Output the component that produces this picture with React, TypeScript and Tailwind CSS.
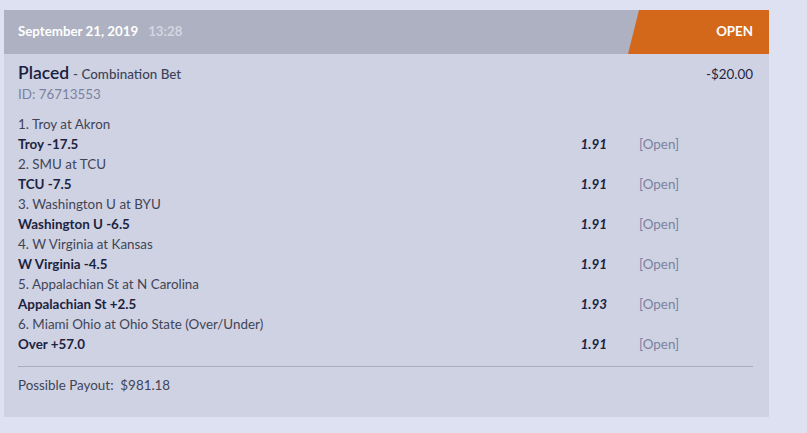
import React from "react";

const legs = [
  { game: "1. Troy at Akron", pick: "Troy -17.5", odds: "1.91" },
  { game: "2. SMU at TCU", pick: "TCU -7.5", odds: "1.91" },
  { game: "3. Washington U at BYU", pick: "Washington U -6.5", odds: "1.91" },
  { game: "4. W Virginia at Kansas", pick: "W Virginia -4.5", odds: "1.91" },
  { game: "5. Appalachian St at N Carolina", pick: "Appalachian St +2.5", odds: "1.93" },
  { game: "6. Miami Ohio at Ohio State (Over/Under)", pick: "Over +57.0", odds: "1.91" },
];

export default function App() {
  return (
    <div
      className="w-[807px] h-[433px] bg-[#dee1f1] pt-[10px] pl-[4px] overflow-hidden"
      style={{ fontFamily: "Lato, 'Open Sans', sans-serif" }}
    >
      <div className="w-[765px] bg-[#cfd2e3]">
        <div className="relative h-[44px] bg-[#adb1c1] flex items-center pl-[14px]">
          <span className="text-[13.3px] font-bold text-white">September 21, 2019</span>
          <span className="text-[13.3px] font-bold text-[#d3d6e0] ml-[10px]">13:28</span>
          <div
            className="absolute top-0 right-0 h-[44px] w-[141px] bg-[#d3681b] flex items-center justify-end pr-[16px]"
            style={{ clipPath: "polygon(11px 0, 100% 0, 100% 100%, 0 100%)" }}
          >
            <span className="text-[13.3px] font-bold text-white">OPEN</span>
          </div>
        </div>
        <div className="pl-[14px] pr-[16px] pt-[8px] pb-[22px]">
          <div className="flex items-baseline h-[22px]">
            <span className="text-[17.5px] font-semibold text-[#1a2140] leading-[22px]">Placed</span>
            <span className="text-[13.4px] font-medium text-[#3d4358] ml-[4px]">- Combination Bet</span>
            <span className="ml-auto text-[13.4px] text-[#1f2642]">-$20.00</span>
          </div>
          <div className="text-[13.4px] leading-[20px] text-[#7a82a0]">ID: 76713553</div>
          <div className="mt-[10px]">
            {legs.map((l) => (
              <div key={l.game}>
                <div className="text-[13.4px] leading-[20px] text-[#3f4556]">{l.game}</div>
                <div className="flex text-[13.4px] leading-[20px]">
                  <span className="flex-1 font-bold text-[#1c2340]">{l.pick}</span>
                  <span className="w-[60px] text-right italic font-bold text-[#1c2340]">{l.odds}</span>
                  <span className="ml-[32px] w-[114px] text-[#7a82a0]">[Open]</span>
                </div>
              </div>
            ))}
          </div>
          <div className="mt-[12px] border-t border-[#a9adbe]" />
          <div className="pt-[8px] text-[13.4px] leading-[20px] text-[#3f4556]">
            Possible Payout:&nbsp; $981.18
          </div>
        </div>
      </div>
    </div>
  );
}
